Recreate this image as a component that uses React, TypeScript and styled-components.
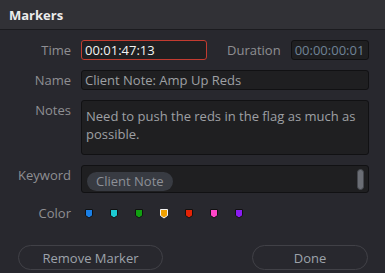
import styled, {createGlobalStyle} from "styled-components";

const Global = createGlobalStyle`
    html, body {
        margin: 0;
        padding: 0;
        background: #28282e;
    }
    * {
        box-sizing: border-box;
    }
`

const Dialog = styled.div`
    width: 385px;
    height: 273px;
    background: #28282e;
    font-family: "Open Sans", "Noto Sans", sans-serif;
    overflow: hidden;
`

const TitleBar = styled.div`
    height: 30px;
    padding: 0 9px;
    display: flex;
    align-items: center;
    background: #313136;
    border-bottom: 1px solid #1b1b1f;
    color: #ececec;
    font-size: 13px;
    font-weight: 700;
`

const Body = styled.div`
    padding: 10px 17px 0 0;
    display: grid;
    grid-template-columns: 71px 1fr;
    column-gap: 10px;
    row-gap: 10px;
    align-items: start;
`

const Label = styled.div`
    text-align: right;
    color: #8f8f93;
    font-size: 13px;
    line-height: 20px;
`

const Field = styled.div<{$height?: number; $focus?: boolean; $dim?: boolean}>`
    height: ${p => p.$height ?? 20}px;
    background: #1f1f21;
    border: 1px solid ${p => p.$focus ? "#c23b30" : "#111113"};
    border-radius: 3px;
    color: ${p => p.$dim ? "#6f8397" : p.$focus ? "#f2f2f2" : "#9ea0a4"};
    font-size: 13px;
    line-height: 18px;
    padding: 0 3px;
    white-space: nowrap;
    overflow: hidden;
`

const TimeRow = styled.div`
    display: flex;
    align-items: center;
`

const TimeField = styled(Field)`
    width: 126px;
`

const DurationLabel = styled(Label)`
    margin-left: 20px;
    margin-right: 10px;
`

const DurationField = styled(Field)`
    width: 78px;
`

const NotesField = styled(Field)`
    white-space: normal;
    line-height: 18px;
    padding: 6px 4px;
`

const KeywordField = styled(Field)`
    display: flex;
    align-items: center;
    justify-content: space-between;
    padding: 0 4px 0 5px;
`

const Tag = styled.span`
    height: 19px;
    padding: 0 9px;
    border-radius: 10px;
    background: #383b42;
    color: #8d9097;
    font-size: 13px;
    line-height: 19px;
    margin-top: 4px;
`

const Scroll = styled.span`
    width: 7px;
    height: 21px;
    border-radius: 4px;
    background: #6b6e75;
    border: 1px solid #46484e;
`

const Swatches = styled.div`
    display: flex;
    gap: 15px;
    padding-left: 3px;
    height: 20px;
    align-items: center;
`

const Footer = styled.div`
    display: flex;
    justify-content: space-between;
    padding: 22px 17px 0 18px;
`

const Button = styled.button<{$width: number}>`
    width: ${p => p.$width}px;
    height: 25px;
    border: 1px solid #414147;
    border-radius: 13px;
    background: transparent;
    color: #9da3ab;
    font-family: inherit;
    font-size: 13px;
    padding: 0;
`

const MarkerIcon = ({color, selected}: {color: string; selected?: boolean}) => (
    <svg width="10" height="11" viewBox="0 0 10 11">
        <path
            d="M1.5 1.5 H8.5 V7.5 L5 10 L1.5 7.5 Z"
            fill={color}
            stroke={selected ? "#f4f4f4" : "#111"}
            strokeWidth="1"
            strokeLinejoin="round"
        />
    </svg>
)

const colors = ["#1a7fe6", "#1ccbd3", "#11a011", "#f0a000", "#e42306", "#ff45c8", "#8a1cf2"]

const App = () => {
    return (
        <>
            <Global/>
            <Dialog>
                <TitleBar>Markers</TitleBar>
                <Body>
                    <Label>Time</Label>
                    <TimeRow>
                        <TimeField $focus>00:01:47:13</TimeField>
                        <DurationLabel>Duration</DurationLabel>
                        <DurationField $dim>00:00:00:01</DurationField>
                    </TimeRow>

                    <Label>Name</Label>
                    <Field>Client Note: Amp Up Reds</Field>

                    <Label>Notes</Label>
                    <NotesField $height={55}>Need to push the reds in the flag as much as possible.</NotesField>

                    <Label>Keyword</Label>
                    <KeywordField $height={28}>
                        <Tag>Client Note</Tag>
                        <Scroll/>
                    </KeywordField>

                    <Label>Color</Label>
                    <Swatches>
                        {colors.map((c, i) => <MarkerIcon key={c} color={c} selected={i === 3}/>)}
                    </Swatches>
                </Body>
                <Footer>
                    <Button $width={145}>Remove Marker</Button>
                    <Button $width={116}>Done</Button>
                </Footer>
            </Dialog>
        </>
    )
}

export default App
